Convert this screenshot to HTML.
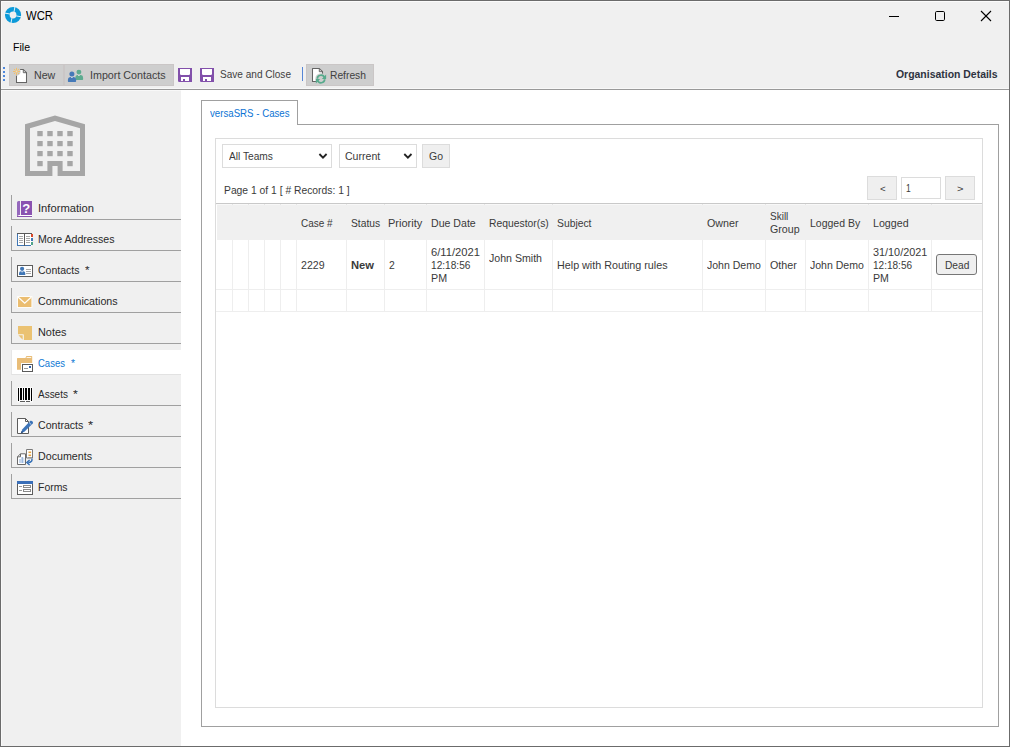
<!DOCTYPE html>
<html><head><meta charset="utf-8"><title>WCR</title>
<style>
*{box-sizing:border-box;margin:0;padding:0}
html,body{width:1010px;height:747px;overflow:hidden;background:#f0f0f0;font-family:"Liberation Sans",sans-serif;font-size:12px;color:#222}
.a{position:absolute}
.t{position:absolute;white-space:nowrap;line-height:14px;font-size:11.5px;transform-origin:0 50%;color:#2a2a2a}
#svg{position:absolute;left:0;top:0}
.side{position:absolute;left:11px;width:170px;height:25px;border-left:1px solid #a0a0a0;border-bottom:1px solid #a0a0a0}
.tbbtn{position:absolute;top:64px;height:22px;background:#cecece;border:1px solid #cac6c6}
.cell{position:absolute;background:#eeeeee;width:1px}
</style></head><body>
<!-- window chrome -->
<div class="a" style="left:0;top:0;width:1010px;height:747px;background:#f0f0f0"></div>
<!-- white content area -->
<div class="a" style="left:181px;top:90px;width:828px;height:656px;background:#fff"></div>
<!-- inner highlights -->
<div class="a" style="left:1px;top:1px;width:1008px;height:1px;background:#fbfbfb"></div>
<div class="a" style="left:1px;top:1px;width:1px;height:745px;background:#f9f9f9"></div>
<div class="a" style="left:1px;top:88px;width:1008px;height:1px;background:#f8f8f8"></div>
<div class="a" style="left:1px;top:90px;width:180px;height:1px;background:#f8f8f8"></div>
<!-- toolbar/under line -->
<div class="a" style="left:1px;top:89px;width:1008px;height:1px;background:#999"></div>
<!-- toolbar buttons -->
<div class="tbbtn" style="left:9px;width:55px"></div>
<div class="tbbtn" style="left:64px;width:110px"></div>
<div class="tbbtn" style="left:306px;width:68px"></div>
<div class="a" style="left:302px;top:67px;width:1px;height:14px;background:#5686d6"></div>
<!-- sidebar items -->
<div class="side" style="top:195px"></div>
<div class="side" style="top:226px"></div>
<div class="side" style="top:257px"></div>
<div class="side" style="top:288px"></div>
<div class="side" style="top:319px"></div>
<div class="side" style="top:350px;background:#fff;border-left-color:#e6e6e6;border-bottom-color:#e2e2e2"></div>
<div class="side" style="top:381px"></div>
<div class="side" style="top:412px"></div>
<div class="side" style="top:443px"></div>
<div class="side" style="top:474px"></div>
<!-- tab panel -->
<div class="a" style="left:201px;top:124px;width:798px;height:603px;border:1px solid #a0a0a0;background:#fff"></div>
<div class="a" style="left:201px;top:100px;width:97px;height:25px;border:1px solid #a0a0a0;border-bottom:none;background:#fff"></div>
<!-- inner border -->
<div class="a" style="left:215px;top:138px;width:768px;height:570px;border:1px solid #dcdcdc;background:#fff"></div>
<!-- filters -->
<div class="a" style="left:222px;top:144px;width:110px;height:24px;border:1px solid #dcdcdc;background:#fff"></div>
<div class="a" style="left:339px;top:144px;width:78px;height:24px;border:1px solid #dcdcdc;background:#fff"></div>
<div class="a" style="left:422px;top:144px;width:28px;height:24px;border:1px solid #dcdcdc;background:#efefef"></div>
<!-- pager -->
<div class="a" style="left:867px;top:176px;width:30px;height:24px;border:1px solid #dcdcdc;background:#efefef"></div>
<div class="a" style="left:901px;top:177px;width:40px;height:22px;border:1px solid #dcdcdc;background:#fff"></div>
<div class="a" style="left:945px;top:176px;width:30px;height:24px;border:1px solid #dcdcdc;background:#efefef"></div>
<!-- table -->
<div class="a" style="left:216px;top:203px;width:766px;height:1px;background:#c9c9c9"></div>
<div class="a" style="left:216px;top:204px;width:766px;height:1px;background:#f8f8f8"></div>
<div class="a" style="left:232px;top:204px;width:1px;height:1px;background:#e6e6e6"></div>
<div class="a" style="left:248px;top:204px;width:1px;height:1px;background:#e6e6e6"></div>
<div class="a" style="left:264px;top:204px;width:1px;height:1px;background:#e6e6e6"></div>
<div class="a" style="left:280px;top:204px;width:1px;height:1px;background:#e6e6e6"></div>
<div class="a" style="left:296px;top:204px;width:1px;height:1px;background:#e6e6e6"></div>
<div class="a" style="left:346px;top:204px;width:1px;height:1px;background:#e6e6e6"></div>
<div class="a" style="left:384px;top:204px;width:1px;height:1px;background:#e6e6e6"></div>
<div class="a" style="left:426px;top:204px;width:1px;height:1px;background:#e6e6e6"></div>
<div class="a" style="left:484px;top:204px;width:1px;height:1px;background:#e6e6e6"></div>
<div class="a" style="left:552px;top:204px;width:1px;height:1px;background:#e6e6e6"></div>
<div class="a" style="left:702px;top:204px;width:1px;height:1px;background:#e6e6e6"></div>
<div class="a" style="left:765px;top:204px;width:1px;height:1px;background:#e6e6e6"></div>
<div class="a" style="left:805px;top:204px;width:1px;height:1px;background:#e6e6e6"></div>
<div class="a" style="left:868px;top:204px;width:1px;height:1px;background:#e6e6e6"></div>
<div class="a" style="left:931px;top:204px;width:1px;height:1px;background:#e6e6e6"></div>
<div class="a" style="left:217px;top:205px;width:765px;height:35px;background:#f0f0f0"></div>
<div class="a" style="left:216px;top:289px;width:766px;height:1px;background:#eeeeee"></div>
<div class="a" style="left:216px;top:311px;width:766px;height:1px;background:#eeeeee"></div>
<!-- col borders: header part slightly darker? -->
<div class="cell" style="left:232px;top:240px;height:71px"></div>
<div class="cell" style="left:248px;top:240px;height:71px"></div>
<div class="cell" style="left:264px;top:240px;height:71px"></div>
<div class="cell" style="left:280px;top:240px;height:71px"></div>
<div class="cell" style="left:296px;top:240px;height:71px"></div>
<div class="cell" style="left:346px;top:240px;height:71px"></div>
<div class="cell" style="left:384px;top:240px;height:71px"></div>
<div class="cell" style="left:426px;top:240px;height:71px"></div>
<div class="cell" style="left:484px;top:240px;height:71px"></div>
<div class="cell" style="left:552px;top:240px;height:71px"></div>
<div class="cell" style="left:702px;top:240px;height:71px"></div>
<div class="cell" style="left:765px;top:240px;height:71px"></div>
<div class="cell" style="left:805px;top:240px;height:71px"></div>
<div class="cell" style="left:868px;top:240px;height:71px"></div>
<div class="cell" style="left:931px;top:240px;height:71px"></div>

<!-- Dead button -->
<div class="a" style="left:936px;top:254px;width:41px;height:21px;border:1px solid #767676;border-radius:3px;background:#efefef"></div>
<div class="t" style="left:26.00px;top:9.00px;transform:scaleX(0.9041);font-size:12.5px;color:#000">WCR</div>
<div class="t" style="left:13.00px;top:40.00px;transform:scaleX(0.9174);color:#000">File</div>
<div class="t" style="left:34.00px;top:68.00px;transform:scaleX(0.9238);color:#404040">New</div>
<div class="t" style="left:90.00px;top:68.00px;transform:scaleX(0.9323);color:#404040">Import Contacts</div>
<div class="t" style="left:220.00px;top:67.00px;transform:scaleX(0.8743);color:#404040">Save and Close</div>
<div class="t" style="left:330.00px;top:68.00px;transform:scaleX(0.8921);color:#404040">Refresh</div>
<div class="t" style="left:896.00px;top:67.00px;transform:scaleX(0.9080);font-weight:bold;color:#2e3340">Organisation Details</div>
<div class="t" style="left:38.00px;top:201.00px;transform:scaleX(0.9733)">Information</div>
<div class="t" style="left:38.00px;top:232.00px;transform:scaleX(0.9209)">More Addresses</div>
<div class="t" style="left:38.00px;top:263.00px;transform:scaleX(0.9155)">Contacts</div>
<div class="t" style="left:85.00px;top:263.00px;transform:scaleX(1.0111)">*</div>
<div class="t" style="left:38.00px;top:294.00px;transform:scaleX(0.9298)">Communications</div>
<div class="t" style="left:38.00px;top:325.00px;transform:scaleX(0.9460)">Notes</div>
<div class="t" style="left:38.00px;top:356.00px;transform:scaleX(0.8253);color:#0f78d4">Cases</div>
<div class="t" style="left:71.00px;top:356.00px;transform:scaleX(0.8949);color:#0f78d4">*</div>
<div class="t" style="left:38.00px;top:387.00px;transform:scaleX(0.8666)">Assets</div>
<div class="t" style="left:73.00px;top:387.00px;transform:scaleX(1.0738)">*</div>
<div class="t" style="left:38.00px;top:418.00px;transform:scaleX(0.9215)">Contracts</div>
<div class="t" style="left:88.00px;top:418.00px;transform:scaleX(1.1451)">*</div>
<div class="t" style="left:38.00px;top:449.00px;transform:scaleX(0.9286)">Documents</div>
<div class="t" style="left:38.00px;top:480.00px;transform:scaleX(0.9085)">Forms</div>
<div class="t" style="left:210.00px;top:106.00px;transform:scaleX(0.8413);color:#0c74d4">versaSRS - Cases</div>
<div class="t" style="left:229.00px;top:149.00px;transform:scaleX(0.8838);color:#3a3a3a">All Teams</div>
<div class="t" style="left:345.00px;top:149.00px;transform:scaleX(0.9176);color:#3a3a3a">Current</div>
<div class="t" style="left:429.00px;top:149.00px;transform:scaleX(0.9116);color:#3a3a3a">Go</div>
<div class="t" style="left:224.00px;top:183.00px;transform:scaleX(0.8974);color:#3a3a3a">Page 1 of 1 [ # Records: 1 ]</div>
<div class="t" style="left:880.00px;top:182.00px;transform:scaleX(1.0286);font-size:9.5px;color:#3a3a3a">&lt;</div>
<div class="t" style="left:906.00px;top:181.00px;transform:scaleX(0.7390);color:#3a3a3a">1</div>
<div class="t" style="left:957.00px;top:182.00px;transform:scaleX(1.1750);font-size:9.5px;color:#3a3a3a">&gt;</div>
<div class="t" style="left:301.00px;top:216.00px;transform:scaleX(0.8674);color:#3a3a3a">Case #</div>
<div class="t" style="left:351.00px;top:216.00px;transform:scaleX(0.8944);color:#3a3a3a">Status</div>
<div class="t" style="left:388.00px;top:216.00px;transform:scaleX(0.9579);color:#3a3a3a">Priority</div>
<div class="t" style="left:431.00px;top:216.00px;transform:scaleX(0.9210);color:#3a3a3a">Due Date</div>
<div class="t" style="left:489.00px;top:216.00px;transform:scaleX(0.8998);color:#3a3a3a">Requestor(s)</div>
<div class="t" style="left:557.00px;top:216.00px;transform:scaleX(0.8989);color:#3a3a3a">Subject</div>
<div class="t" style="left:707.00px;top:216.00px;transform:scaleX(0.9297);color:#3a3a3a">Owner</div>
<div class="t" style="left:770.00px;top:209.00px;transform:scaleX(0.8694);color:#3a3a3a">Skill</div>
<div class="t" style="left:770.00px;top:222.00px;transform:scaleX(0.9261);color:#3a3a3a">Group</div>
<div class="t" style="left:810.00px;top:216.00px;transform:scaleX(0.9116);color:#3a3a3a">Logged By</div>
<div class="t" style="left:873.00px;top:216.00px;transform:scaleX(0.9268);color:#3a3a3a">Logged</div>
<div class="t" style="left:301.00px;top:258.00px;transform:scaleX(0.9215);color:#3a3a3a">2229</div>
<div class="t" style="left:351.00px;top:258.00px;transform:scaleX(0.9718);font-weight:bold;color:#3a3a3a">New</div>
<div class="t" style="left:389.00px;top:258.00px;transform:scaleX(0.9037);color:#3a3a3a">2</div>
<div class="t" style="left:431.00px;top:245.00px;transform:scaleX(0.9746);color:#3a3a3a">6/11/2021</div>
<div class="t" style="left:431.00px;top:258.00px;transform:scaleX(0.8811);color:#3a3a3a">12:18:56</div>
<div class="t" style="left:431.00px;top:271.00px;transform:scaleX(0.9294);color:#3a3a3a">PM</div>
<div class="t" style="left:489.00px;top:251.00px;transform:scaleX(0.9216);color:#3a3a3a">John Smith</div>
<div class="t" style="left:557.00px;top:258.00px;transform:scaleX(0.9349);color:#3a3a3a">Help with Routing rules</div>
<div class="t" style="left:707.00px;top:258.00px;transform:scaleX(0.9152);color:#3a3a3a">John Demo</div>
<div class="t" style="left:770.00px;top:258.00px;transform:scaleX(0.9328);color:#3a3a3a">Other</div>
<div class="t" style="left:810.00px;top:258.00px;transform:scaleX(0.9159);color:#3a3a3a">John Demo</div>
<div class="t" style="left:873.00px;top:245.00px;transform:scaleX(0.9432);color:#3a3a3a">31/10/2021</div>
<div class="t" style="left:873.00px;top:258.00px;transform:scaleX(0.8727);color:#3a3a3a">12:18:56</div>
<div class="t" style="left:873.00px;top:271.00px;transform:scaleX(0.9216);color:#3a3a3a">PM</div>
<div class="t" style="left:945.00px;top:258.00px;transform:scaleX(0.8865);color:#3a3a3a">Dead</div>
<svg id="svg" width="1010" height="747" viewBox="0 0 1010 747">
<!-- app icon -->
<g>
<circle cx="13.05" cy="15" r="5.75" fill="none" stroke="#0c9ad9" stroke-width="4.7"/>
<g stroke="#eaf5fb" stroke-width="0.95" stroke-linecap="butt">
<line x1="15" y1="6.4" x2="14" y2="11.9"/>
<line x1="21.7" y1="16.9" x2="16.2" y2="15.9"/>
<line x1="10.9" y1="23.6" x2="11.9" y2="18.1"/>
<line x1="4.4" y1="13" x2="9.9" y2="14"/>
</g>
</g>
<!-- window controls -->
<g stroke="#000" stroke-width="1" fill="none" shape-rendering="crispEdges">
<line x1="889" y1="16.5" x2="899" y2="16.5"/>
</g>
<rect x="935.5" y="11.5" width="9" height="9" rx="1.2" fill="none" stroke="#000" stroke-width="1"/>
<g stroke="#000" stroke-width="1.1" fill="none">
<line x1="981" y1="11" x2="991" y2="21"/><line x1="991" y1="11" x2="981" y2="21"/>
</g>
<!-- toolbar grip dots -->
<g fill="#4f88dc" shape-rendering="crispEdges">
<rect x="3" y="67" width="2" height="2"/><rect x="3" y="71" width="2" height="2"/><rect x="3" y="75" width="2" height="2"/><rect x="3" y="79" width="2" height="2"/>
</g>
<!-- New icon -->
<g>
<path d="M16.5 69.5 H23.3 L26.5 72.7 V82.5 H16.5 Z" fill="#fff" stroke="#646464" stroke-width="1.05" stroke-linejoin="round"/>
<path d="M23.3 69.5 V72.7 H26.5" fill="none" stroke="#646464" stroke-width="1"/>
<circle cx="16.3" cy="71.4" r="4.3" fill="#cecece"/>
<g stroke="#f1c06c" stroke-width="1.05" stroke-linecap="butt">
<line x1="16.5" y1="67.9" x2="16.5" y2="70.4"/><line x1="16.5" y1="72.5" x2="16.5" y2="75"/>
<line x1="13" y1="71.45" x2="15.5" y2="71.45"/><line x1="17.5" y1="71.45" x2="20" y2="71.45"/>
</g>
<circle cx="16.5" cy="71.45" r="1.25" fill="#e6dccb" stroke="#f1c06c" stroke-width="0.9"/>
<g fill="#f1c06c"><circle cx="14.5" cy="69.45" r="0.62"/><circle cx="18.5" cy="69.45" r="0.62"/><circle cx="14.5" cy="73.45" r="0.62"/><circle cx="18.5" cy="73.45" r="0.62"/></g>
</g>
<!-- Import contacts icon -->
<g>
<circle cx="78.9" cy="72.1" r="2.45" fill="#5dab90"/>
<path d="M75.3 79.2 V78 Q75.3 75.1 78 75.1 H80.4 Q83.1 75.1 83.1 78 V79.2 Q83.1 79.9 82.4 79.9 H76 Q75.3 79.9 75.3 79.2 Z" fill="#5dab90"/>
<path d="M78.1 75 H79.7 V76 H78.1 Z" fill="#d4e8df"/>
<circle cx="71.9" cy="74" r="2.5" fill="#4579b8"/>
<path d="M67.9 81.2 V80 Q67.9 77 70.9 77 H73.1 Q76.1 77 76.1 80 V81.2 Q76.1 81.9 75.4 81.9 H68.6 Q67.9 81.9 67.9 81.2 Z" fill="#4579b8"/>
<path d="M71.1 76.9 H72.7 V78 H71.1 Z" fill="#d3dfee"/>
</g>
<!-- save icons -->
<g>
<path d="M178 68 H192 V82 H179.2 Q178 82 178 80.8 Z" fill="#8250ab"/>
<path d="M180 69 H190 V73.8 Q190 75 188.8 75 H181.2 Q180 75 180 73.8 Z" fill="#fff"/>
<rect x="181" y="77" width="8" height="4" fill="#fff" shape-rendering="crispEdges"/>
<rect x="183" y="79" width="2" height="2" fill="#8250ab" shape-rendering="crispEdges"/>
</g>
<g>
<path d="M200 68 H214 V82 H201.2 Q200 82 200 80.8 Z" fill="#8250ab"/>
<path d="M202 69 H212 V73.8 Q212 75 210.8 75 H203.2 Q202 75 202 73.8 Z" fill="#fff"/>
<rect x="203" y="77" width="8" height="4" fill="#fff" shape-rendering="crispEdges"/>
<rect x="205" y="79" width="2" height="2" fill="#8250ab" shape-rendering="crispEdges"/>
</g>
<!-- refresh icon -->
<g>
<path d="M312.5 68.5 H319.3 L322.5 71.7 V81.5 H312.5 Z" fill="#fff" stroke="#646464" stroke-width="1.05" stroke-linejoin="round"/>
<path d="M319.3 68.5 V71.7 H322.5" fill="none" stroke="#646464" stroke-width="1"/>
<circle cx="321" cy="78.9" r="5.7" fill="#cecece"/>
<path d="M317.3 78.7 A3.7 3.7 0 0 1 324.5 77.7" fill="none" stroke="#57aa8c" stroke-width="1.7"/>
<path d="M324.7 79.3 A3.7 3.7 0 0 1 317.5 80.3" fill="none" stroke="#57aa8c" stroke-width="1.7"/>
<path d="M326.1 74.6 V78.9 H321.9 Z" fill="#57aa8c"/>
<path d="M315.9 83.4 V79.1 H320.1 Z" fill="#57aa8c"/>
</g>
<!-- building -->
<path fill-rule="evenodd" fill="#a6a6a6" d="M25 124.3 L55 115.6 L85 124.3 V176 H57.6 V166 H52.4 V176 H25 Z M30 128.2 L55 120.9 L80 128.2 V171 H62.6 V161 H47.4 V171 H30 Z"/>
<g fill="#a6a6a6">
<rect x="37.3" y="131" width="5.4" height="5.2"/><rect x="47.3" y="131" width="5.4" height="5.2"/><rect x="57.3" y="131" width="5.4" height="5.2"/><rect x="67.3" y="131" width="5.4" height="5.2"/>
<rect x="37.3" y="141" width="5.4" height="5.2"/><rect x="47.3" y="141" width="5.4" height="5.2"/><rect x="57.3" y="141" width="5.4" height="5.2"/><rect x="67.3" y="141" width="5.4" height="5.2"/>
<rect x="37.3" y="151" width="5.4" height="5.2"/><rect x="47.3" y="151" width="5.4" height="5.2"/><rect x="57.3" y="151" width="5.4" height="5.2"/><rect x="67.3" y="151" width="5.4" height="5.2"/>
<rect x="37.3" y="161" width="5.4" height="5.2"/><rect x="67.3" y="161" width="5.4" height="5.2"/>
</g>
<!-- Information icon -->
<g>
<path d="M17 202.5 Q17 201 18.5 201 H20 V215 H18.5 Q17 215 17 216.5 Z" fill="#9568bd"/>
<rect x="21" y="201" width="11" height="14" fill="#8a52b0"/>
<path d="M17 215.6 Q17.3 216.8 19 216.8 H32 V216 H19 Q17.6 216 17 215 Z" fill="#8a52b0"/>
<rect x="17" y="216" width="15" height="1" fill="#8a52b0"/>
<rect x="19" y="215" width="13" height="1" fill="#fff"/>
<text x="26.3" y="212.8" font-family="Liberation Sans, sans-serif" font-size="13" font-weight="bold" fill="#fff" text-anchor="middle">?</text>
</g>
<!-- More Addresses icon -->
<g shape-rendering="crispEdges">
<rect x="17" y="233" width="15" height="13" fill="#fff"/>
<rect x="17" y="233" width="15" height="1" fill="#5a5a5a"/>
<rect x="17" y="234" width="1" height="12" fill="#3f76b5"/>
<rect x="17" y="245" width="14" height="1" fill="#3f76b5"/>
<rect x="24" y="233" width="1" height="13" fill="#5a5a5a"/>
<rect x="31" y="234" width="2" height="3" fill="#d9482b"/>
<rect x="31" y="238" width="2" height="3" fill="#3f76b5"/>
<rect x="31" y="242" width="2" height="3" fill="#4fa389"/>
<g fill="#a8a8a8">
<rect x="19" y="236" width="4" height="1"/><rect x="19" y="238" width="4" height="1"/><rect x="19" y="240" width="4" height="1"/><rect x="19" y="242" width="4" height="1"/>
<rect x="26" y="236" width="4" height="1"/><rect x="26" y="238" width="4" height="1"/><rect x="26" y="240" width="4" height="1"/><rect x="26" y="242" width="4" height="1"/>
</g>
</g>
<!-- Contacts icon -->
<g>
<rect x="17.5" y="265.5" width="15" height="11" fill="#fff" stroke="#5c5c5c" stroke-width="1" shape-rendering="crispEdges"/>
<circle cx="22.1" cy="268.8" r="2.1" fill="#3f76b5"/>
<path d="M19 275 V273.6 Q19 271.2 21 271.2 H23.2 Q25.3 271.2 25.3 273.6 V275 Z" fill="#3f76b5"/>
<path d="M21.3 271.2 H22.9 V272.2 H21.3 Z" fill="#dfe8f3"/>
<g fill="#a8a8a8" shape-rendering="crispEdges"><rect x="26" y="269" width="5" height="1"/><rect x="26" y="271" width="5" height="1"/><rect x="26" y="273" width="5" height="1"/></g>
</g>
<!-- Communications icon -->
<g>
<rect x="17" y="296" width="15.4" height="12" fill="#fefcf7"/>
<rect x="18" y="297" width="13.4" height="10" fill="#ebbd70"/>
<path d="M18 297 L24.7 303.2 L31.4 297" fill="none" stroke="#fffdf8" stroke-width="1.3"/>
</g>
<!-- Notes icon -->
<g>
<path d="M18 326 H32 V340 H23.6 V334.4 H18 Z" fill="#ebc272"/>
<path d="M18 334.4 H23.6 V340 H22.7 V335.3 H18 Z" fill="#fbf8f0"/>
<path d="M18.4 335.3 H22.7 V339.7 Z" fill="#ebc272"/>
</g>
<!-- Cases icon -->
<g>
<path d="M17 358.6 Q17 358 17.6 358 H25.4 L26.4 356 H31.6 Q32.2 356 32.2 356.6 V369.8 H17 Z" fill="#e9bd78"/>
<rect x="26.6" y="357" width="4.6" height="1" fill="#fdf6ea"/>
<rect x="21" y="363" width="13" height="10" fill="#fff"/>
<rect x="22.5" y="364.5" width="10" height="7" fill="#fff" stroke="#5a5a5a" stroke-width="1" shape-rendering="crispEdges"/>
<rect x="24" y="368" width="4" height="1" fill="#9a9a9a" shape-rendering="crispEdges"/>
<rect x="29" y="366" width="2" height="2" fill="#2f62b0" shape-rendering="crispEdges"/>
</g>
<!-- Assets icon (barcode) -->
<rect x="17" y="387" width="16" height="15.4" rx="1" fill="#fafafa"/>
<g fill="#000" shape-rendering="crispEdges">
<rect x="18" y="388" width="1" height="13"/>
<rect x="20" y="388" width="2" height="12"/>
<rect x="23" y="388" width="1" height="12"/>
<rect x="25" y="388" width="2" height="12"/>
<rect x="28" y="388" width="2" height="12"/>
<rect x="31" y="388" width="1" height="13"/>
<rect x="20" y="401" width="5" height="1" fill="#5a5a5a"/><rect x="26" y="401" width="4" height="1" fill="#5a5a5a"/>
</g>
<!-- Contracts icon -->
<g>
<path d="M17.5 418.5 H25.5 L28.5 421.5 V433.5 H17.5 Z" fill="#fff" stroke="#5c5c5c" stroke-width="1"/>
<path d="M25.5 418.5 V421.5 H28.5" fill="none" stroke="#5c5c5c" stroke-width="1"/>
<path d="M30.4 420.8 Q31.6 420.4 32.6 421.4 Q33.4 422.4 32.8 423.4 L24.6 431.6 L20.8 433.4 L22.4 429.2 Z" fill="#3d74b8"/>
<path d="M28.9 422.3 L31.3 424.7" stroke="#e6edf6" stroke-width="0.8"/>
<path d="M20.8 433.4 L21.8 430.8 L23.2 432.2 Z" fill="#27497a"/>
</g>
<!-- Documents icon -->
<g>
<path d="M26.5 449.5 H32.5 V458 H26.5 Z" fill="#fff" stroke="#7a7a7a" stroke-width="1"/>
<rect x="28.5" y="451.5" width="2.6" height="1.6" fill="#e8a33c"/>
<rect x="28.5" y="454.5" width="2.6" height="1.6" fill="#e8a33c"/>
<rect x="28" y="457" width="4" height="1" fill="#9a9a9a"/>
<path d="M20.5 453.8 H25.5 V464.5 H17.5 V456.8 Z" fill="#fff" stroke="#6a6a6a" stroke-width="1"/>
<path d="M17.5 456.8 H20.5 V453.8" fill="none" stroke="#6a6a6a" stroke-width="1"/>
<rect x="19.2" y="459" width="1.6" height="4" fill="#b8cce6"/><rect x="21.4" y="457" width="1.8" height="6" fill="#9fbbe0"/><rect x="23.4" y="458" width="1" height="5" fill="#c8d8ec"/>
<path d="M32 458.6 Q32.4 462.6 28.2 462.6" fill="none" stroke="#2f6cb5" stroke-width="1.4"/>
<path d="M29.6 460 L26.8 462.6 L29.6 465 " fill="none" stroke="#2f6cb5" stroke-width="1.3"/>
</g>
<!-- Forms icon -->
<g shape-rendering="crispEdges">
<rect x="17.5" y="481.5" width="15" height="13" fill="#fff" stroke="#5c5c5c" stroke-width="1"/>
<rect x="17" y="481" width="16" height="3" fill="#3a6fb8"/>
<rect x="19" y="486" width="3" height="1" fill="#999"/><rect x="19" y="490" width="3" height="1" fill="#999"/>
<rect x="23.5" y="485.5" width="7" height="2" fill="#fff" stroke="#8a8a8a" stroke-width="1"/>
<rect x="23.5" y="489.5" width="7" height="2" fill="#fff" stroke="#8a8a8a" stroke-width="1"/>
</g>
<!-- select chevrons -->
<g fill="none" stroke="#222" stroke-width="1.8" stroke-linecap="butt" stroke-linejoin="miter">
<path d="M319.4 154 L323 157.7 L326.6 154"/>
<path d="M404.3 154 L407.9 157.7 L411.5 154"/>
</g>
</svg>

<!-- window border -->
<div class="a" style="left:0;top:0;width:1010px;height:747px;border:1px solid #6b6b6b;pointer-events:none"></div>
</body></html>
